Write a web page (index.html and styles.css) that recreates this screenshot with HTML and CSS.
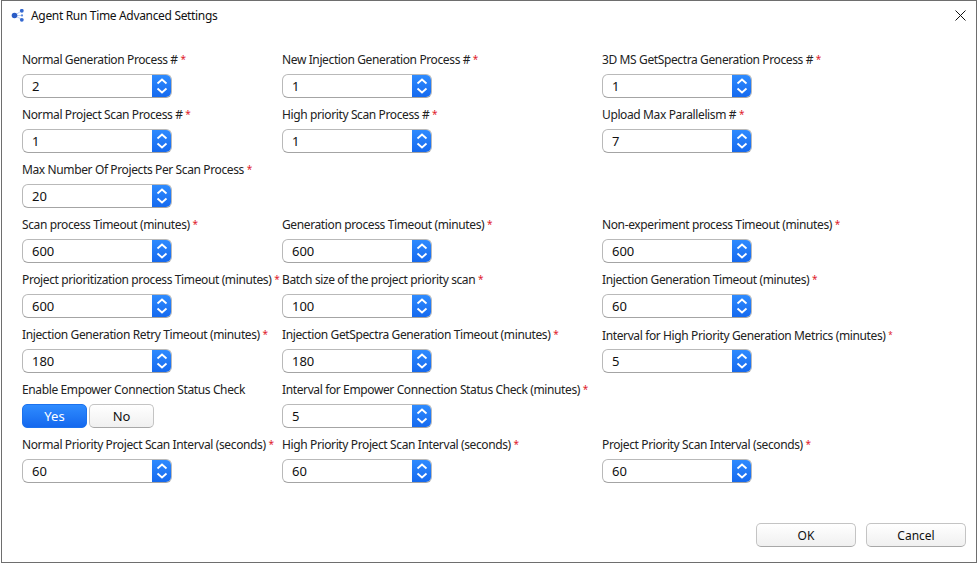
FILE: index.html
```html
<!DOCTYPE html>
<html lang="en">
<head>
<meta charset="utf-8">
<title>Agent Run Time Advanced Settings</title>
<link rel="stylesheet" href="styles.css">
</head>
<body>
<div class="window">
  <header class="titlebar">
    <svg class="logo" width="14" height="14" viewBox="0 0 14 14"><path d="M3.5 6.5L11 1.5M3.5 6.5H11M3.5 6.5L11 10.5" stroke="#9db8ea" stroke-width=".7"/><circle cx="3.5" cy="6.5" r="2.8" fill="#2a5cc6"/><circle cx="10.8" cy="1.8" r="1.9" fill="#3468d0"/><circle cx="11" cy="6.4" r="1.1" fill="#5c8ade"/><circle cx="10.8" cy="10.8" r="1.9" fill="#3468d0"/></svg>
    <span class="title">Agent Run Time Advanced Settings</span>
    <svg class="close" width="11" height="11" viewBox="0 0 11 11"><path d="M.5.5l10 10M10.5.5l-10 10" stroke="#111" fill="none"/></svg>
  </header>
  <main class="form">
    <div class="field"><label>Normal Generation Process # <b>*</b></label><div class="spin"><span>2</span><i><svg width="12" height="20" viewBox="0 0 12 20"><path d="M1.5 7.5l4.5-4 4.5 4M1.5 12.5l4.5 4 4.5-4"/></svg></i></div></div>
    <div class="field"><label>New Injection Generation Process # <b>*</b></label><div class="spin"><span>1</span><i><svg width="12" height="20" viewBox="0 0 12 20"><path d="M1.5 7.5l4.5-4 4.5 4M1.5 12.5l4.5 4 4.5-4"/></svg></i></div></div>
    <div class="field"><label>3D MS GetSpectra Generation Process # <b>*</b></label><div class="spin"><span>1</span><i><svg width="12" height="20" viewBox="0 0 12 20"><path d="M1.5 7.5l4.5-4 4.5 4M1.5 12.5l4.5 4 4.5-4"/></svg></i></div></div>

    <div class="field"><label>Normal Project Scan Process # <b>*</b></label><div class="spin"><span>1</span><i><svg width="12" height="20" viewBox="0 0 12 20"><path d="M1.5 7.5l4.5-4 4.5 4M1.5 12.5l4.5 4 4.5-4"/></svg></i></div></div>
    <div class="field"><label>High priority Scan Process # <b>*</b></label><div class="spin"><span>1</span><i><svg width="12" height="20" viewBox="0 0 12 20"><path d="M1.5 7.5l4.5-4 4.5 4M1.5 12.5l4.5 4 4.5-4"/></svg></i></div></div>
    <div class="field"><label>Upload Max Parallelism # <b>*</b></label><div class="spin"><span>7</span><i><svg width="12" height="20" viewBox="0 0 12 20"><path d="M1.5 7.5l4.5-4 4.5 4M1.5 12.5l4.5 4 4.5-4"/></svg></i></div></div>

    <div class="field full"><label>Max Number Of Projects Per Scan Process <b>*</b></label><div class="spin"><span>20</span><i><svg width="12" height="20" viewBox="0 0 12 20"><path d="M1.5 7.5l4.5-4 4.5 4M1.5 12.5l4.5 4 4.5-4"/></svg></i></div></div>

    <div class="field"><label>Scan process Timeout (minutes) <b>*</b></label><div class="spin"><span>600</span><i><svg width="12" height="20" viewBox="0 0 12 20"><path d="M1.5 7.5l4.5-4 4.5 4M1.5 12.5l4.5 4 4.5-4"/></svg></i></div></div>
    <div class="field"><label>Generation process Timeout (minutes) <b>*</b></label><div class="spin"><span>600</span><i><svg width="12" height="20" viewBox="0 0 12 20"><path d="M1.5 7.5l4.5-4 4.5 4M1.5 12.5l4.5 4 4.5-4"/></svg></i></div></div>
    <div class="field"><label>Non-experiment process Timeout (minutes) <b>*</b></label><div class="spin"><span>600</span><i><svg width="12" height="20" viewBox="0 0 12 20"><path d="M1.5 7.5l4.5-4 4.5 4M1.5 12.5l4.5 4 4.5-4"/></svg></i></div></div>

    <div class="field"><label>Project prioritization process Timeout (minutes) <b>*</b></label><div class="spin"><span>600</span><i><svg width="12" height="20" viewBox="0 0 12 20"><path d="M1.5 7.5l4.5-4 4.5 4M1.5 12.5l4.5 4 4.5-4"/></svg></i></div></div>
    <div class="field"><label>Batch size of the project priority scan <b>*</b></label><div class="spin"><span>100</span><i><svg width="12" height="20" viewBox="0 0 12 20"><path d="M1.5 7.5l4.5-4 4.5 4M1.5 12.5l4.5 4 4.5-4"/></svg></i></div></div>
    <div class="field"><label>Injection Generation Timeout (minutes) <b>*</b></label><div class="spin"><span>60</span><i><svg width="12" height="20" viewBox="0 0 12 20"><path d="M1.5 7.5l4.5-4 4.5 4M1.5 12.5l4.5 4 4.5-4"/></svg></i></div></div>

    <div class="field"><label>Injection Generation Retry Timeout (minutes) <b>*</b></label><div class="spin"><span>180</span><i><svg width="12" height="20" viewBox="0 0 12 20"><path d="M1.5 7.5l4.5-4 4.5 4M1.5 12.5l4.5 4 4.5-4"/></svg></i></div></div>
    <div class="field"><label>Injection GetSpectra Generation Timeout (minutes) <b>*</b></label><div class="spin"><span>180</span><i><svg width="12" height="20" viewBox="0 0 12 20"><path d="M1.5 7.5l4.5-4 4.5 4M1.5 12.5l4.5 4 4.5-4"/></svg></i></div></div>
    <div class="field"><label>Interval for High Priority Generation Metrics (minutes) <b class="faint">*</b></label><div class="spin"><span>5</span><i><svg width="12" height="20" viewBox="0 0 12 20"><path d="M1.5 7.5l4.5-4 4.5 4M1.5 12.5l4.5 4 4.5-4"/></svg></i></div></div>

    <div class="field"><label>Enable Empower Connection Status Check</label><div class="toggle"><span class="opt on">Yes</span><span class="opt">No</span></div></div>
    <div class="field span2"><label>Interval for Empower Connection Status Check (minutes) <b>*</b></label><div class="spin"><span>5</span><i><svg width="12" height="20" viewBox="0 0 12 20"><path d="M1.5 7.5l4.5-4 4.5 4M1.5 12.5l4.5 4 4.5-4"/></svg></i></div></div>

    <div class="field"><label>Normal Priority Project Scan Interval (seconds) <b>*</b></label><div class="spin"><span>60</span><i><svg width="12" height="20" viewBox="0 0 12 20"><path d="M1.5 7.5l4.5-4 4.5 4M1.5 12.5l4.5 4 4.5-4"/></svg></i></div></div>
    <div class="field"><label>High Priority Project Scan Interval (seconds) <b>*</b></label><div class="spin"><span>60</span><i><svg width="12" height="20" viewBox="0 0 12 20"><path d="M1.5 7.5l4.5-4 4.5 4M1.5 12.5l4.5 4 4.5-4"/></svg></i></div></div>
    <div class="field"><label>Project Priority Scan Interval (seconds) <b>*</b></label><div class="spin"><span>60</span><i><svg width="12" height="20" viewBox="0 0 12 20"><path d="M1.5 7.5l4.5-4 4.5 4M1.5 12.5l4.5 4 4.5-4"/></svg></i></div></div>
  </main>
  <footer class="actions">
    <button class="btn">OK</button>
    <button class="btn">Cancel</button>
  </footer>
</div>
</body>
</html>
```
FILE: styles.css
```css
html, body { margin: 0; padding: 0; background: #fff; }
body { width: 979px; height: 565px; overflow: hidden; font-family: "Noto Sans", "Open Sans", sans-serif; font-size: 12px; color: #1a1a1a; }
.window { box-sizing: border-box; width: 976px; height: 563px; border: 1px solid #6e6e6e; margin-left: 1px; display: flex; flex-direction: column; background: #fff; }
.titlebar { display: flex; align-items: center; height: 29px; padding: 0 10px 0 9px; flex: none; }
.logo { flex: none; margin-right: 6px; }
.title { flex: 1; font-size: 12px; letter-spacing: -.33px; color: #111; }
.form { display: grid; grid-template-columns: 260px 320px 1fr; grid-auto-rows: 55px; padding: 21px 0 0 20px; flex: none; }
.field { display: flex; flex-direction: column; align-items: flex-start; min-width: 0; }
.full { grid-column: 1 / -1; }
.span2 { grid-column: 2 / -1; }
label { display: block; height: 17px; line-height: 17px; white-space: nowrap; letter-spacing: -.38px; color: #222; margin-bottom: 6px; }
label b { color: #e0202a; font-weight: 400; font-size: 10px; vertical-align: 1px; }
label b.faint { font-size: 8px; vertical-align: 2px; }
.spin { box-sizing: border-box; width: 150px; height: 24px; border: 1px solid #b9b9b9; border-bottom-color: #a4a4a4; border-radius: 6px; display: flex; align-items: stretch; overflow: hidden; background: #fff; }
.spin span { flex: 1; padding-left: 9px; line-height: 22px; font-size: 13px; color: #111; }
.spin i { flex: none; width: 20px; margin: -1px; background: linear-gradient(#2f8cff, #1468ee); display: flex; align-items: center; justify-content: center; }
.spin svg path { stroke: #fff; stroke-width: 1.8; fill: none; }
.toggle { display: flex; gap: 2px; }
.opt { box-sizing: border-box; width: 65px; height: 24px; border: 1px solid #c4c4c4; border-bottom-color: #a8a8a8; border-radius: 5px; text-align: center; line-height: 22px; font-size: 13px; color: #111; background: linear-gradient(#fff, #f0f0f0); }
.opt.on { background: linear-gradient(#2f8cff, #1468ee); border-color: #1c72ee; color: #fff; }
.actions { margin-top: auto; display: flex; justify-content: flex-end; gap: 10px; padding: 0 10px 15px 0; }
.btn { box-sizing: border-box; width: 100px; height: 24px; border: 1px solid #c4c4c4; border-bottom-color: #a8a8a8; border-radius: 5px; background: linear-gradient(#fff, #f0f0f0); font: 12px "Noto Sans", sans-serif; color: #111; padding: 0; }
```
